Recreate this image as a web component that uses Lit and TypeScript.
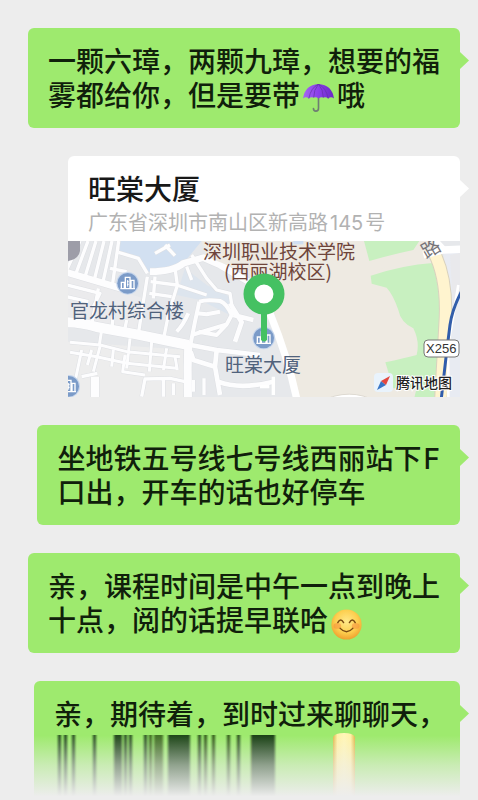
import { LitElement, html, svg, css } from "lit";
import { customElement } from "lit/decorators.js";

const umbrella = html`<svg class="emoji" viewBox="0 0 32 32" role="img" aria-label="☂">
  <defs>
    <linearGradient id="um" x1="0" x2="1"><stop offset="0" stop-color="#a566f2"/><stop offset=".5" stop-color="#8a3fea"/><stop offset="1" stop-color="#6a27c4"/></linearGradient>
  </defs>
  <path d="M16 2v23q0 3-2.700 3-2.500 0-2.500-2.600" fill="none" stroke="#6f7f72" stroke-width="1.700" stroke-linecap="round"/>
  <path d="M0 15Q2 1 16 0 30 1 32 15q-3-2.500-6 0-2-2-5-1-2.500-1-5 1-2-2-5-1-3-1-5 1-3-2.500-6 0z" fill="url(#um)"/>
  <path d="M16 0Q8 4 6 15M16 0q-5 6-5 14M16 0q5 6 5 14M16 0q8 4 10 15" fill="none" stroke="#6330a8" stroke-width=".7"/>
</svg>`;

const smile = html`<svg class="emoji" viewBox="0 0 32 32" role="img" aria-label="😊">
  <defs>
    <radialGradient id="sm" cx=".5" cy=".4" r=".62"><stop offset="0" stop-color="#ffe98a"/><stop offset=".6" stop-color="#fdcf4f"/><stop offset="1" stop-color="#ee9c2b"/></radialGradient>
  </defs>
  <circle cx="16" cy="16" r="15.600" fill="url(#sm)"/>
  <ellipse cx="6.500" cy="17.500" rx="4" ry="3" fill="#f58a3c" opacity=".5"/>
  <ellipse cx="25.500" cy="17.500" rx="4" ry="3" fill="#f58a3c" opacity=".5"/>
  <path d="M7 14q3-5.500 6 0M19 14q3-5.500 6 0M9.500 20q6.500 7 13 0" fill="none" stroke="#7a4a12" stroke-width="1.500" stroke-linecap="round"/>
</svg>`;

/* Street centre lines: [width, path] */
const roads: [number, string][] = [
  [30, "M20 262Q60 262 110 276L230 298 385 330"],
  [24, "M385 320L383 400 384 500M105 425V500"],
  [20, "M270 110Q340 110 370 85L430 68 480 90 600 160M20 112L200 165"],
  [10, "M60 18L20 105M84 18L48 115M108 18L76 122M132 18L104 130M156 18L130 136M176 18L158 145"],
  [10, "M175 52L235 70 262 115M285 55L330 30M315 30L345 62M150 100L200 110"],
  [10, "M262 125L250 200 236 290M272 140L350 150M268 175L335 185M285 125L280 190M345 100L352 150 325 240 312 305M20 150L120 175 100 215M20 185L85 200M115 160L95 270M160 240L155 285M200 255L192 295"],
  [10, "M380 95L395 135M395 60L440 130 470 165 510 175 520 240M350 150L440 180"],
  [12, "M418 200Q440 192 480 198 500 205 515 240L500 268 395 300M418 200L405 260 392 325M410 235L440 238 480 230M415 290L470 300 500 268M350 290Q370 270 385 235"],
  [14, "M510 205L545 262 525 320M392 330L470 345 600 360M520 240L580 255M470 345L465 395 400 375 392 350M465 395L480 480M475 440Q540 465 640 440"],
  [9, "M30 322L120 330 200 350 360 365M125 285L118 330M30 352L110 365 200 385 350 400M210 310L200 400M275 320L268 410M320 340L310 405M65 345L45 440M95 345L82 390M120 335L100 410M160 345L155 395M195 360L188 410 255 420M345 365L352 405"],
  [10, "M245 485L255 432 330 430 375 440M310 430V485M65 425L112 415M340 445V480M432 430V480M400 435V470"],
];

const building = (x: number, y: number) => svg`
  <g transform="translate(${x} ${y})">
    <circle r="34" fill="#c5d5ec"/><circle r="31" fill="#7b9bc8"/>
    <path d="M-19 15V-3h9v18M-7 15V-18h14v33M10 15V-9h9v24M-22 16h44" fill="none" stroke="#fff" stroke-width="4"/>
    <path d="M0-10v20M-2-5h5M-2 3h5" stroke="#fff" stroke-width="3"/>
  </g>`;

const mapArt = svg`
  <g transform="translate(-8 -6) scale(.33333)">
    <path d="M0 0h1220v500H0z" fill="#e6e8eb"/>
    <path d="M20 320L385 345V500H20z" fill="#ededed"/>
    <path d="M20 120L250 190 230 290 20 250z" fill="#ebebed"/>
    <path d="M180 18H425L370 85 325 108 265 110 235 70 180 50z" fill="#d2e0f1"/>
    <path d="M375 100L440 150 510 185 520 245 420 195 350 180z" fill="#dde5ee"/>
    <g fill="none" stroke="#dddfe3" stroke-linejoin="round">
      ${roads.map(([w, d]) => svg`<path d=${d} stroke-width=${w + 3}/>`)}
    </g>
    <g fill="none" stroke="#fdfdfe" stroke-linejoin="round">
      ${roads.map(([w, d]) => svg`<path d=${d} stroke-width=${w}/>`)}
    </g>
    <path d="M425 18H1140L1140 500H710Q680 370 645 240L600 130 440 65z" fill="#eeeae2"/>
    <path d="M630 235Q685 370 712 500" fill="none" stroke="#fff" stroke-width="22"/>
    <path d="M600 455h28M640 425v55" stroke="#fff" stroke-width="10"/>
    <path d="M700 18h30v10h-30z" fill="#cfdff2"/>
    <path d="M912 18H1078L1060 45Q990 60 928 78z" fill="#c8f0c0"/>
    <path d="M932 122Q1030 90 1118 84 1140 160 1140 250L1124 500H1060L1070 460H1000L976 382Q1030 370 1070 360 1080 320 1060 280 1022 262 1015 225 1000 180 980 158L935 146z" fill="#c8f0c0"/>
    <path d="M928 100Q1010 68 1120 52" fill="none" stroke="#eeeae2" stroke-width="28"/>
    <path d="M1148 40Q1200 60 1220 40V500H1120L1148 350Q1170 180 1148 40z" fill="#e8ebf2"/>
    <path d="M1170 60L1220 50V140L1180 230z" fill="#e9e9ec"/>
    <path d="M1118 45Q1165 130 1155 270L1142 500" fill="none" stroke="#d9d2be" stroke-width="40"/>
    <path d="M1118 45Q1165 130 1155 270L1142 500" fill="none" stroke="#fff4cf" stroke-width="34"/>
    <path d="M1090 60L1150 45 1220 42M1125 18L1150 45" fill="none" stroke="#fff" stroke-width="22"/>
    <path d="M1195 150L1165 330V490" fill="none" stroke="#fff" stroke-width="8"/>
    <path d="M1204 170Q1176 225 1170 270L1160 350 1144 490" fill="none" stroke="#315dab" stroke-width="9"/>
    <path d="M780 500Q870 455 950 500z" fill="#fff" stroke="#dedad2" stroke-width="3"/>
    <path d="M24 18h36v30q-5 25-36 30z" fill="#9d9da8"/>
    ${building(203, 145)} ${building(611, 309)} ${building(26, 454)}
  </g>`;

const mapLabels = svg`
  <g class="place">
    <text x="2" y="77">官龙村综合楼</text>
    <text x="157" y="131">旺棠大厦</text>
  </g>
  <g class="school">
    <text x="135" y="18">深圳职业技术学院</text>
    <text x="156" y="38">(西丽湖校区)</text>
  </g>
  <text class="road" transform="translate(358 18) rotate(-30)">路</text>
  <rect x="356" y="99" width="35" height="17" rx="4" fill="#fff" stroke="#777" stroke-width="1"/>
  <text class="plate" x="358" y="112">X256</text>
  <path d="M193 70h6v29q-3 3-6 0z" fill="#45c162"/>
  <circle cx="196" cy="53" r="15" fill="#fff" stroke="#45c162" stroke-width="11"/>
  <rect x="306" y="132" width="19" height="19" rx="4" fill="#e9f3fc"/>
  <path d="M309 149L313 140 318 144z" fill="#3775c6"/>
  <path d="M322 135L313 140 318 144z" fill="#e3483f"/>
  <text class="brand" x="328" y="147">腾讯地图</text>`;

/* Smeared strokes of the cut-off line: [x, width, opacity] */
const streaks: [number, number, number][] = [
  [24, 3, .9], [30, 3, .9], [38, 3, .85], [59, 3, .85], [80, 8, .85], [90, 3, .85], [95, 3, .85],
  [110, 3, .85], [115, 3, .75], [120, 9, .65], [134, 22, .88], [164, 3, .85], [170, 3, .8],
  [178, 3, .8], [193, 3, .8], [203, 3, .85], [217, 24, .9],
];

@customElement("app-root")
export class AppRoot extends LitElement {
  static styles = css`
    :host {
      display: block;
      min-height: 100vh;
      background: #ededed;
      color: #10200b;
      font-family: "Noto Sans CJK SC", sans-serif;
    }
    .chat {
      display: flex;
      flex-direction: column;
      align-items: flex-end;
      gap: 28px;
      padding: 28px 18px 0 28px;
      height: 100vh;
      box-sizing: border-box;
      overflow: hidden;
    }
    .bubble, .card {
      position: relative;
      flex: none;
      border-radius: 6px;
      box-sizing: border-box;
    }
    .bubble {
      max-width: 100%;
      padding: 15px 20px 17px;
      background: #9eea6e;
      font-size: 28px;
      font-weight: 500;
      line-height: 34px;
    }
    .bubble::after, .card::after {
      content: "";
      position: absolute;
      left: 100%;
      top: 24px;
      width: 9px;
      height: 17px;
      background: #9eea6e;
      clip-path: polygon(0 0, 100% 50%, 0 100%);
    }
    .card::after { background: #fff; }
    p { margin: 0; }
    .latin, .number { font-family: Inter, sans-serif; line-height: 1; }
    .latin { padding-left: 2px; }
    .number { padding: 0 2px; }
    .emoji { width: 31px; height: 31px; margin: -4px 3px; vertical-align: -5px; }
    .card {
      width: calc(100% - 40px);
      background: #fff;
      color: #181818;
      text-decoration: none;
      display: block;
    }
    .info { padding: 14px 20px 5px; }
    h2 { margin: 0 0 2px; font-size: 28px; font-weight: 500; line-height: 36px; }
    .address { font-size: 20px; line-height: 28px; color: #b2b2b2; white-space: nowrap; }
    .map { display: block; width: 100%; aspect-ratio: 392 / 156; }
    .map text { font-size: 19px; }
    .place { fill: #50627c; }
    .school { fill: #6e453b; }
    .road { fill: #77767a; }
    .map .plate { font-family: "Liberation Sans", sans-serif; font-size: 13px; fill: #333; }
    .map .brand { font-size: 14px; font-weight: 500; fill: #222; stroke: #fff; stroke-width: 2px; paint-order: stroke; }
    .last { padding: 15px 14px 0 20px; border-radius: 6px 6px 0 0; }
    .smear {
      display: block;
      width: calc(100% + 34px);
      height: 70px;
      margin: 0 -14px 0 -20px;
    }
  `;

  render() {
    return html`
      <main class="chat">
        <p class="bubble">一颗六璋，两颗九璋，想要的福雾都给你，但是要带${umbrella}哦</p>
        <a class="card" href="#map">
          <div class="info">
            <h2>旺棠大厦</h2>
            <p class="address">广东省深圳市南山区新高路<span class="number">145</span>号</p>
          </div>
          <svg class="map" viewBox="0 0 392 156">${mapArt}${mapLabels}</svg>
        </a>
        <p class="bubble">坐地铁五号线七号线西丽站下<span class="latin">F</span><br>口出，开车的话也好停车</p>
        <p class="bubble">亲，课程时间是中午一点到晚上十点，阅的话提早联哈${smile}</p>
        <div class="bubble last">
          <p>亲，期待着，到时过来聊聊天，</p>
          <svg class="smear" viewBox="0 0 426 70" preserveAspectRatio="none" aria-hidden="true">
            <defs>
              <linearGradient id="fade" x1="0" x2="0" y1="0" y2="1">
                <stop offset=".08" stop-color="#ededed" stop-opacity="0"/>
                <stop offset=".5" stop-color="#ededed" stop-opacity=".55"/>
                <stop offset=".95" stop-color="#ededed"/>
              </linearGradient>
              <linearGradient id="glow"><stop offset="0" stop-color="#e0b850"/><stop offset=".2" stop-color="#fff2a8"/><stop offset=".5" stop-color="#fff6b8"/><stop offset=".8" stop-color="#fff2a8"/><stop offset="1" stop-color="#e0b850"/></linearGradient>
              <filter id="soft" x="-.1" width="1.2"><feGaussianBlur stdDeviation=".8 0"/></filter>
            </defs>
            <g filter="url(#soft)">
              ${streaks.map(([x, w, o]) => svg`<rect x=${x} y="5" width=${w} height="65" fill="#0a3008" opacity=${o}/>`)}
            </g>
            <path d="M299 70V7Q301 3 310 3t11 4v63z" fill="url(#glow)"/>
            <path d="M0 0h426v70H0z" fill="url(#fade)"/>
          </svg>
        </div>
      </main>
    `;
  }
}
